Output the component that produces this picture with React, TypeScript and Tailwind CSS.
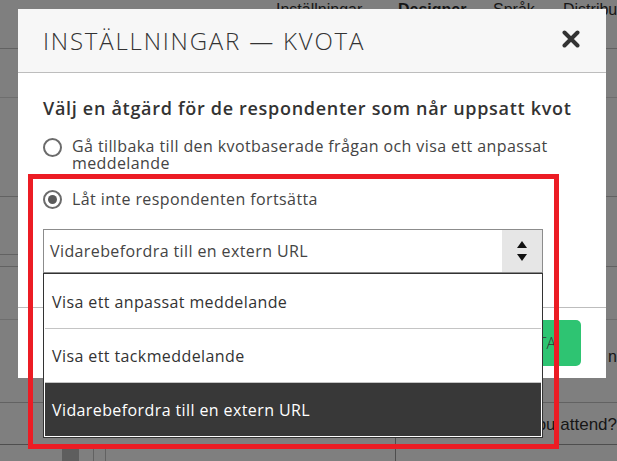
import React from 'react';

const options = ['Visa ett anpassat meddelande', 'Visa ett tackmeddelande', 'Vidarebefordra till en extern URL'];

function Radio({ checked }: { checked?: boolean }) {
  return (
    <span className="flex h-[19px] w-[19px] shrink-0 items-center justify-center rounded-full border-2 border-[#6b6b6b] bg-white">
      {checked && <span className="h-[9px] w-[9px] rounded-full bg-[#5a5a5a]" />}
    </span>
  );
}

function BackgroundPage() {
  return (
    <div className="flex flex-col font-['Liberation_Sans',sans-serif] text-[16px] text-[#161616]">
      <div className="flex h-[49px] whitespace-nowrap border-b border-[#626262] pl-[276px] leading-[20px]">
        <span className="w-[122px] shrink-0">Inställningar</span>
        <span className="w-[95px] shrink-0 font-bold">Designer</span>
        <span className="w-[70px] shrink-0">Språk</span>
        <span className="shrink-0">Distribution</span>
      </div>
      <div className="h-[49px] border-b border-[#6e6e6e]" />
      <div className="h-[99px] border-b border-[#626262]" />
      <div className="h-[58px] w-[20px] border-b border-[#626262]" />
      <div className="h-[12px] border-b border-[#626262]" />
      <div className="h-[53px] border-b border-[#6e6e6e]" />
      <div className="flex h-[83px] items-center border-b border-[#626262] pb-[8px] pl-[608px]">
        <span className="whitespace-nowrap">na</span>
      </div>
      <div className="flex h-[42px] border-b border-[#4e4e4e]">
        <div className="w-[396px] border-r border-[#4e4e4e]" />
        <div className="flex flex-1 items-center justify-end overflow-hidden whitespace-nowrap pt-[2px] text-[17px]">
          Which event did you attend?
        </div>
      </div>
      <div className="flex h-[20px]">
        <div className="ml-[62px] w-[17px] bg-[#5e5e5e]" />
        <div className="ml-[14px] w-[13px] border-x border-[#626262]" />
        <div className="ml-[289px] border-l border-[#4e4e4e]" />
      </div>
    </div>
  );
}

function Modal() {
  return (
    <div className="absolute left-[18px] top-[9px] flex w-[588px] flex-col bg-white font-['Open_Sans',sans-serif]">
      <div className="flex h-[64px] items-center justify-between border-b border-[#bdbdbd] bg-[#f7f7f7] pl-[25px] pr-[26px]">
        <h1 className="text-[24px] font-light leading-none tracking-[1.8px] text-[#333]">INSTÄLLNINGAR — KVOTA</h1>
        <svg width="18" height="18" viewBox="0 0 18 18" className="mt-[-3px]">
          <path d="M2.5 2.5 L15.5 15.5 M15.5 2.5 L2.5 15.5" stroke="#333" strokeWidth="4" strokeLinecap="round" />
        </svg>
      </div>

      <div className="flex flex-col pb-[34px] pl-[25px] pr-[20px] pt-[23px]">
        <h2 className="whitespace-nowrap text-[18px] font-semibold leading-[24px] tracking-[0.7px] text-[#333]">
          Välj en åtgärd för de respondenter som når uppsatt kvot
        </h2>
        <label className="mt-[18px] flex gap-[10px] text-[16px] leading-[17px] tracking-[0.4px] text-[#444]">
          <Radio />
          <span>Gå tillbaka till den kvotbaserade frågan och visa ett anpassat meddelande</span>
        </label>
        <label className="mt-[18px] flex items-center gap-[10px] text-[16px] leading-[17px] tracking-[0.4px] text-[#444]">
          <Radio checked />
          <span>Låt inte respondenten fortsätta</span>
        </label>

        <div className="relative mt-[20px] w-[500px]">
          <div className="flex h-[44px] items-stretch border border-[#8c8c8c] bg-white">
            <span className="flex flex-1 items-center pl-[6px] text-[16px] tracking-[0.4px] text-[#444]">
              Vidarebefordra till en extern URL
            </span>
            <span className="flex w-[40px] flex-col items-center justify-center gap-[6px] bg-[#e6e6e6]">
              <svg width="10" height="7" viewBox="0 0 10 7"><path d="M5 0 L10 7 L0 7 Z" fill="#111" /></svg>
              <svg width="10" height="7" viewBox="0 0 10 7"><path d="M0 0 L10 0 L5 7 Z" fill="#111" /></svg>
            </span>
          </div>

          <ul className="absolute left-0 top-full z-10 flex w-full flex-col border border-[#333] bg-white p-[1px] text-[16px] tracking-[0.4px]">
            {options.map((o, i) => (
              <li
                key={o}
                className={
                  i === 2
                    ? 'flex h-[53px] items-center bg-[#383838] pl-[7px] font-medium text-white'
                    : 'flex h-[54px] items-center border-b border-[#c4c4c4] pl-[7px] text-[#333]'
                }
              >
                {o}
              </li>
            ))}
          </ul>
        </div>
      </div>

      <div className="flex h-[71px] items-center justify-end border-t border-[#bdbdbd] pr-[25px]">
        <button className="h-[46px] rounded-[5px] bg-[#2ec472] pl-[20px] pr-[25px] text-[16px] font-light text-[#333]">
          SPARA KVOTA
        </button>
      </div>
    </div>
  );
}

export default function App() {
  return (
    <div className="relative h-[461px] w-[617px] overflow-hidden bg-[#7f7f7f]">
      <BackgroundPage />
      <Modal />
      <div className="pointer-events-none absolute left-[28px] top-[174px] h-[275px] w-[531px] border-[5px] border-[#ec1c24]" />
    </div>
  );
}
